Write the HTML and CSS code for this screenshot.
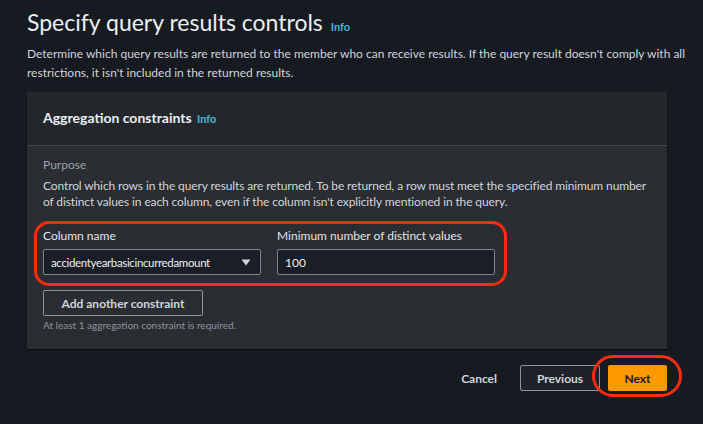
FILE: index.html
```html
<!DOCTYPE html>
<html lang="en">
<head>
<meta charset="utf-8">
<title>Specify query results controls</title>
<link rel="stylesheet" href="styles.css">
</head>
<body>
<main class="page">
  <header class="page-head">
    <h1 class="page-title">Specify query results controls <a class="info" href="#">Info</a></h1>
    <p class="page-desc">Determine which query results are returned to the member who can receive results. If the query result doesn't comply with all restrictions, it isn't included in the returned results.</p>
  </header>

  <section class="panel">
    <div class="panel-head">
      <h2 class="panel-title">Aggregation constraints <a class="info" href="#">Info</a></h2>
    </div>
    <div class="panel-body">
      <div class="field-label muted">Purpose</div>
      <p class="panel-desc">Control which rows in the query results are returned. To be returned, a row must meet the specified minimum number of distinct values in each column, even if the column isn't explicitly mentioned in the query.</p>

      <div class="constraint-row">
        <div class="field">
          <label class="field-label">Column name</label>
          <div class="select">
            <span class="select-value">accidentyearbasicincurredamount</span>
            <svg class="caret" width="10" height="7" viewBox="0 0 10 7"><path d="M0.5 0.5 L9.5 0.5 L5 6.5 Z" fill="#d1d5db"/></svg>
          </div>
        </div>
        <div class="field">
          <label class="field-label">Minimum number of distinct values</label>
          <div class="input">100</div>
        </div>
        <span class="ring ring-row"></span>
      </div>

      <button class="btn btn-normal add-btn">Add another constraint</button>
      <div class="hint">At least 1 aggregation constraint is required.</div>
    </div>
  </section>

  <footer class="actions">
    <button class="btn btn-link">Cancel</button>
    <button class="btn btn-normal">Previous</button>
    <span class="next-wrap">
      <button class="btn btn-primary">Next</button>
      <span class="ring ring-next"></span>
    </span>
  </footer>
</main>
</body>
</html>
```

FILE: styles.css
```css
* { box-sizing: border-box; }
html, body { margin: 0; padding: 0; }
body {
  background: #161a21;
  color: #d1d5db;
  font-family: Lato, "Open Sans", sans-serif;
  width: 703px;
  height: 424px;
  overflow: hidden;
}
.page {
  padding: 8px 0 0 27px;
  width: 703px;
}
.page-title {
  margin: 0;
  font-size: 23px;
  line-height: 28px;
  font-weight: 400;
  color: #eceef0;
}
.info {
  color: #44b9d6;
  font-size: 11px;
  font-weight: 700;
  text-decoration: none;
  margin-left: 2px;
}
.page-desc {
  margin: 3px 0 0;
  width: 672px;
  font-size: 12px;
  line-height: 19px;
}
.panel {
  margin-top: 11px;
  width: 640px;
  background: #2a2d32;
  box-shadow: 0 1px 1px #0c0e12, 0 -1px 0 #24282e;
}
.panel-head {
  background: #23272c;
  padding: 15px 16px 16px;
  border-bottom: 1px solid #41464d;
}
.panel-title {
  margin: 0;
  font-size: 14px;
  line-height: 20px;
  font-weight: 700;
  color: #eceef0;
}
.panel-body {
  padding: 11px 16px 17px;
}
.field-label {
  display: block;
  font-size: 12px;
  line-height: 16px;
  color: #e0e3e6;
}
.muted { color: #9ba3ad; }
.panel-desc {
  margin: 5px 0 0;
  font-size: 12px;
  letter-spacing: -0.12px;
  line-height: 16px;
}
.constraint-row {
  position: relative;
  margin-top: 18px;
  display: flex;
  gap: 16px;
  width: 452px;
}
.field { width: 218px; }
.field .field-label { margin-bottom: 5px; }
.select, .input {
  height: 26px;
  background: #1a1e26;
  border: 1px solid #7d858f;
  border-radius: 2px;
  display: flex;
  align-items: center;
  font-size: 12px;
  color: #eceef0;
}
.select { padding: 0 9px 0 7px; justify-content: space-between; }
.select-value { font-size: 11.5px; letter-spacing: -0.35px; }
.input { padding: 0 7px; }
.ring {
  position: absolute;
  border: 3px solid #ff2a0f;
  pointer-events: none;
}
.ring-row {
  left: -9px; right: -12px; top: -7px; bottom: -11px;
  border-radius: 15px;
}
.btn {
  font-family: inherit;
  font-size: 12px;
  font-weight: 700;
  height: 26px;
  border-radius: 2px;
  cursor: pointer;
}
.btn-normal {
  background: transparent;
  border: 1px solid #8d959f;
  color: #d1d5db;
}
.add-btn {
  margin-top: 15px;
  width: 160px;
  display: block;
}
.hint {
  margin-top: 2px;
  font-size: 10px;
  line-height: 14px;
  color: #8d959f;
}
.actions {
  margin-top: 16px;
  width: 640px;
  display: flex;
  justify-content: flex-end;
  align-items: center;
}
.btn-link {
  background: none;
  border: 0;
  color: #d1d5db;
  margin-right: 23px;
  padding: 0;
}
.actions .btn-normal { width: 80px; margin-right: 8px; background: #1e2229; }
.next-wrap { position: relative; display: inline-flex; }
.btn-primary {
  width: 59px;
  background: #ff9900;
  border: 0;
  color: #16191f;
}
.ring-next {
  left: -16px; right: -15px; top: -10px; bottom: -6px;
  border-radius: 21px;
}
```
